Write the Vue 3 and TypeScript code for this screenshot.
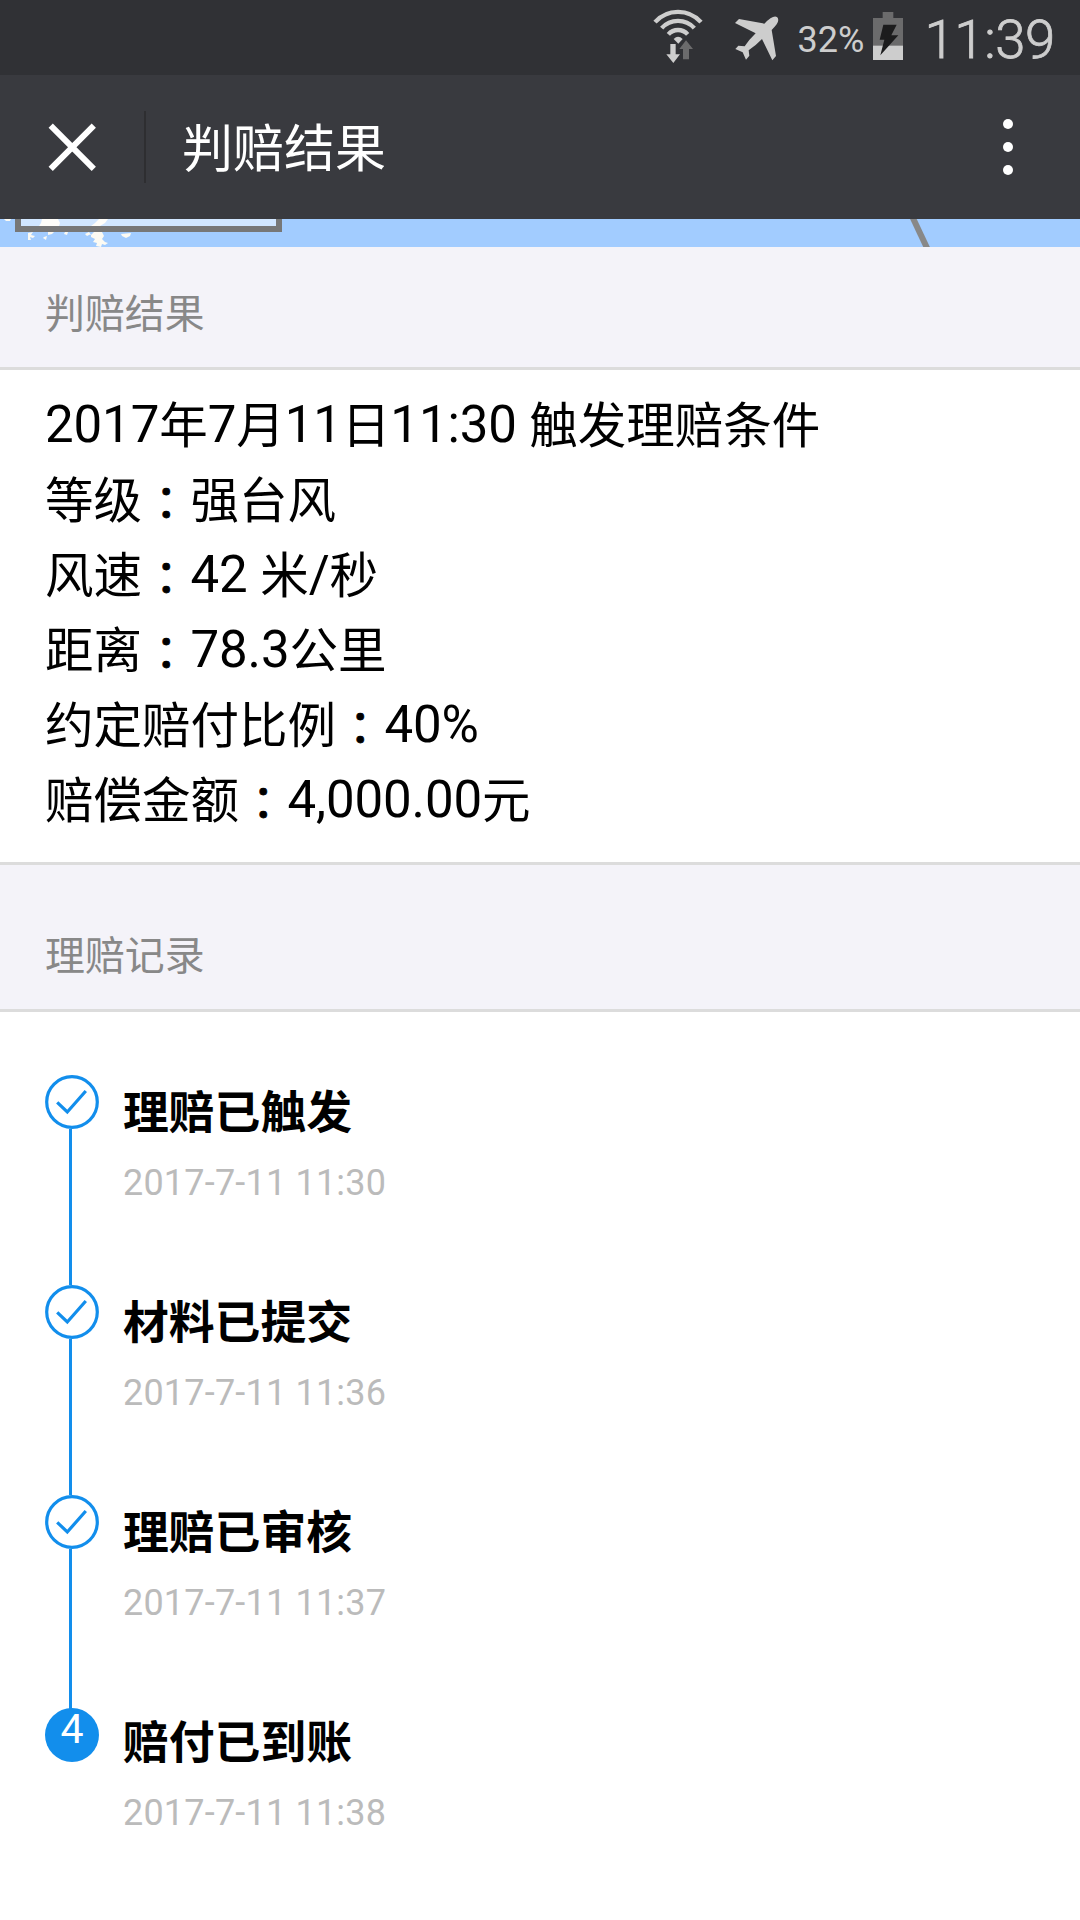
<script setup lang="ts">
interface Run {
  text: string
  kind: 'latin' | 'cjk' | 'colon'
}

interface Step {
  title: string
  time: string
  done: boolean
}

const details: string[] = [
  '2017年7月11日11:30 触发理赔条件',
  '等级：强台风',
  '风速：42 米/秒',
  '距离：78.3公里',
  '约定赔付比例：40%',
  '赔偿金额：4,000.00元',
]

const steps: Step[] = [
  { title: '理赔已触发', time: '2017-7-11 11:30', done: true },
  { title: '材料已提交', time: '2017-7-11 11:36', done: true },
  { title: '理赔已审核', time: '2017-7-11 11:37', done: true },
  { title: '赔付已到账', time: '2017-7-11 11:38', done: false },
]

// Han characters are set slightly smaller than the Latin digits beside them.
function runs(line: string): Run[] {
  const parts = line.match(/：|[\u4e00-\u9fff]+|[^\u4e00-\u9fff：]+/g) ?? []
  return parts.map((text) => ({
    text,
    kind: text === '：' ? 'colon' : /[\u4e00-\u9fff]/.test(text) ? 'cjk' : 'latin',
  }))
}
</script>

<template>
  <div class="screen">
    <div class="status">
      <svg class="wifi" viewBox="36 27 156 165">
        <g fill="none" stroke="#cdcdcd" stroke-width="13">
          <path d="M45 66.5A93 93 0 0 1 183 66.5" />
          <path d="M65 84.5A66 66 0 0 1 163 84.5" />
          <path d="M85 103A39 39 0 0 1 143 103" />
        </g>
        <path fill="#cdcdcd" d="M101 117Q114 104 128 117L115 131Z" />
        <path fill="#cdcdcd" d="M91 132H107V163H120L100 189L79 163H91Z" />
        <path fill="#6b6b6c" d="M138 121L159 147H147V178H129V147H118Z" />
      </svg>
      <svg class="plane" viewBox="282 42 138 138">
        <path
          fill="#cdcdcd"
          d="M411 48Q419 56 410 70Q404 78 395 87L408 165L397 178L366 114Q349 132 326 148L328 164L318 176L308 154L286 144L295 134L314 136Q328 115 347 97L285 66L297 54L373 68Q399 41 411 48Z"
        />
      </svg>
      <span class="percent">32%</span>
      <svg class="battery" viewBox="699 37 90 144">
        <path fill="#6b6b6c" d="M728 37H760V55H789V139H699V55H728Z" />
        <path fill="#cdcdcd" d="M699 138H789V181H699Z" />
        <path fill="#1c1c1d" d="M730 75H770L754 107H775L721 167L733 120H719Z" />
      </svg>
      <span class="clock">11:39</span>
    </div>

    <header class="nav">
      <svg class="close" viewBox="0 0 48 48">
        <path d="M2.7 2.7L45.8 45.8M45.8 2.7L2.7 45.8" stroke="#fff" stroke-width="6" />
      </svg>
      <i class="divider"></i>
      <h1>判赔结果</h1>
      <div class="more"><i></i><i></i><i></i></div>
    </header>

    <svg class="map" viewBox="0 0 1080 28">
      <rect width="1080" height="28" fill="#a2ccff" />
      <g fill="#fcfaf3">
        <path d="M4 0H11L10 2H6ZM42 0H58L60 4L59 7H39L41 4ZM99 0H108L105 4L100 7H91L95 4Z" />
        <path d="M28 14L33 13L31 16L35 17L33 19L30 18L31 21L28 21ZM48 13H54L52 15L48 16ZM44 18L47 17L46 21L43 19ZM65 13L68 13L67 16L64 15Z" />
        <path d="M85 15L89 13L91 16L94 13L102 13L104 17L102 20L105 23L108 24L105 26L102 25L101 28L96 27L97 24L93 23L95 20L91 18L91 15L87 17Z" />
        <path d="M121 15L131 14L130 17L126 19L122 17Z" />
      </g>
      <rect x="18" y="-10" width="261" height="20" fill="#fff" fill-opacity=".5" stroke="#777" stroke-width="6" />
      <path d="M911.5 -4L927.5 30" stroke="#888" stroke-width="6" />
    </svg>

    <h2 class="heading">判赔结果</h2>
    <section class="result">
      <p v-for="line in details" :key="line">
        <span v-for="(run, i) in runs(line)" :key="i" :class="run.kind">{{ run.text }}</span>
      </p>
    </section>

    <h2 class="heading second">理赔记录</h2>
    <ol class="timeline">
      <li v-for="(step, i) in steps" :key="step.title">
        <div class="track">
          <svg v-if="step.done" class="check" viewBox="0 0 54 54">
            <circle cx="27" cy="27" r="25.3" />
            <path d="M12.2 27.3L22.3 37L40.8 16" />
          </svg>
          <span v-else class="number">{{ i + 1 }}</span>
          <i v-if="i < steps.length - 1" class="rail"></i>
        </div>
        <div class="info">
          <h3>{{ step.title }}</h3>
          <time>{{ step.time }}</time>
        </div>
      </li>
    </ol>
  </div>
</template>

<style>
body {
  margin: 0;
  background: #fff;
}
</style>

<style scoped>
.screen {
  width: 1080px;
  height: 1920px;
  overflow: hidden;
  background: #fff;
  color: #000;
  font-family: Roboto, "Noto Sans CJK SC", sans-serif;
}
h1, h2, h3, p, ol {
  margin: 0;
  padding: 0;
  font-weight: 400;
}
svg, i {
  display: block;
  flex: none;
}
.status {
  display: flex;
  align-items: flex-start;
  height: 75px;
  box-sizing: border-box;
  background: #303135;
  color: #cdcdcd;
  white-space: nowrap;
}
.wifi {
  width: 52px;
  height: 55px;
  margin: 9px 0 0 652px;
}
.plane {
  width: 46px;
  height: 46px;
  margin: 15px 0 0 30px;
}
.percent {
  width: 75px;
  margin: 19px 0 0 17.5px;
  font-size: 36px;
  line-height: 42px;
}
.battery {
  width: 30px;
  height: 48px;
  margin: 12px 0 0 0.5px;
}
.clock {
  margin: 6px 0 0 21.5px;
  font-size: 54.5px;
  font-weight: 300;
  line-height: 66px;
  letter-spacing: -0.4px;
  -webkit-text-stroke: 0.8px #cdcdcd;
}
.nav {
  display: flex;
  align-items: center;
  height: 144px;
  background: #393a3f;
  color: #fff;
}
.close {
  width: 48px;
  height: 48px;
  margin: 0 0 0 48px;
}
.divider {
  width: 2px;
  height: 72px;
  margin-left: 48px;
  background: #2e2e31;
}
.nav h1 {
  flex: 1;
  margin: 5px 0 0 36px;
  font-size: 51px;
  line-height: 72px;
}
.more {
  display: flex;
  flex-direction: column;
  gap: 13px;
  margin-right: 67px;
}
.more i {
  width: 10px;
  height: 10px;
  border-radius: 50%;
  background: #fff;
}
.map {
  width: 1080px;
  height: 28px;
}
.heading {
  height: 120px;
  padding: 40px 45px 0;
  box-sizing: border-box;
  background: #f4f3f9;
  color: #888;
  font-size: 39.9px;
  line-height: 56px;
}
.heading.second {
  height: 144px;
  padding-top: 64px;
}
.result {
  padding: 17px 45px 25px;
  border: solid #dcdcdc;
  border-width: 3px 0;
}
.result p {
  height: 75px;
  font-size: 51px;
  line-height: 75px;
  white-space: pre;
}
.latin {
  letter-spacing: -0.12px;
}
.cjk {
  position: relative;
  top: 1px;
  font-size: 48.5px;
  line-height: 1;
}
/* The full-width colon sits low, with its dots centred on the digits' lower half. */
.colon {
  position: relative;
  top: 3px;
  margin: 0 1.25px;
  font-family: "Noto Sans CJK TC", sans-serif;
  font-size: 46px;
  line-height: 1;
  -webkit-text-stroke: 0.8px #000;
}
.timeline {
  padding: 63px 45px 0;
  border-top: 3px solid #dcdcdc;
  list-style: none;
}
.timeline li {
  display: flex;
  height: 210px;
}
.track {
  display: flex;
  flex-direction: column;
  width: 54px;
}
.check {
  width: 54px;
  height: 54px;
  fill: none;
  stroke: #128eec;
  stroke-width: 3.2;
}
.rail {
  flex: 1;
  width: 3px;
  margin-left: 24px;
  background: #128eec;
}
.timeline li:nth-last-child(2) .rail {
  margin-bottom: -4px;
}
.number {
  height: 54px;
  margin-top: 3px;
  border-radius: 50%;
  background: #128eec;
  color: #fff;
  font-size: 41px;
  line-height: 42px;
  text-align: center;
}
.info {
  display: flex;
  flex-direction: column;
  padding-left: 24px;
}
.info h3 {
  margin-top: 5px;
  font-size: 45.8px;
  font-weight: 700;
  line-height: 68px;
}
.info time {
  margin-top: 14px;
  color: #bbb;
  font-size: 36px;
  line-height: 42px;
  letter-spacing: 0.2px;
}
</style>
